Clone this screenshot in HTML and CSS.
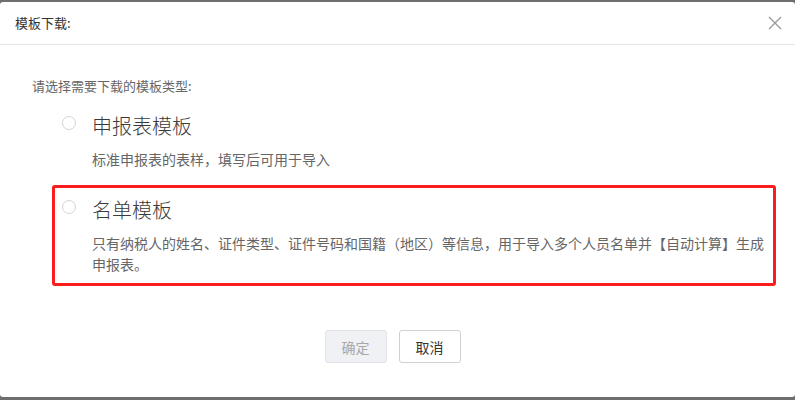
FILE: index.html
```html
<!DOCTYPE html>
<html lang="zh-CN">
<head>
    <meta charset="UTF-8">
    <meta name="viewport" content="width=device-width, initial-scale=1.0">
    <title>模板下载</title>
    <link rel="stylesheet" href="styles.css">
</head>
<body>
    <div class="dialog">
        <div class="dialog-header">
            <span class="dialog-title">模板下载:</span>
            <button class="close-btn" title="关闭">
                <svg width="14" height="14" viewBox="0 0 14 14">
                    <path d="M1 1 L13 13 M13 1 L1 13" stroke="#9a9a9a" stroke-width="1.4" fill="none"/>
                </svg>
            </button>
        </div>

        <div class="dialog-body">
            <p class="hint">请选择需要下载的模板类型:</p>

            <div class="option">
                <span class="radio"></span>
                <div class="option-text">
                    <div class="option-title">申报表模板</div>
                    <div class="option-desc">标准申报表的表样，填写后可用于导入</div>
                </div>
            </div>

            <div class="option highlight">
                <span class="radio"></span>
                <div class="option-text">
                    <div class="option-title">名单模板</div>
                    <div class="option-desc">只有纳税人的姓名、证件类型、证件号码和国籍（地区）等信息，用于导入多个人员名单并【自动计算】生成申报表。</div>
                </div>
            </div>
        </div>

        <div class="dialog-footer">
            <button class="btn disabled">确定</button>
            <button class="btn">取消</button>
        </div>
    </div>
</body>
</html>
```

FILE: styles.css
```css
* {
    margin: 0;
    padding: 0;
    box-sizing: border-box;
}

body {
    font-family: "Noto Sans CJK SC", "Noto Sans", sans-serif;
    color: #333;
    background: #6e6e6e;
    height: 400px;
    overflow: hidden;
}

.dialog {
    margin-top: 2px;
    height: 395px;
    background: white;
    border-radius: 3px;
    display: flex;
    flex-direction: column;
}

.dialog-header {
    height: 43px;
    padding: 0 13px 0 15px;
    border-bottom: 1px solid #e6e6e6;
    display: flex;
    align-items: center;
    justify-content: space-between;
}

.dialog-title {
    font-size: 13px;
    line-height: 20px;
    color: #333;
}

.close-btn {
    background: none;
    border: none;
    width: 14px;
    height: 14px;
    cursor: pointer;
    display: flex;
}

.dialog-body {
    padding: 31px 19px 0 32px;
}

.hint {
    font-size: 13px;
    line-height: 20px;
    color: #666;
    margin-bottom: 5px;
}

.option {
    margin-left: 20px;
    border: 3px solid transparent;
    border-radius: 3px;
    padding: 8px 5px 8px 7px;
    display: flex;
    gap: 16px;
}

.option + .option {
    margin-top: 4px;
}

.option.highlight {
    border-color: #fb1d1d;
}

.radio {
    flex: none;
    width: 14px;
    height: 14px;
    margin-top: 4px;
    border: 1px solid #d4d4d4;
    border-radius: 50%;
    background: white;
}

.option-title {
    font-size: 20px;
    font-weight: 300;
    line-height: 28px;
    color: #3a3a3a;
}

.option-desc {
    margin-top: 9px;
    font-size: 14px;
    line-height: 21px;
    color: #666;
}

.dialog-footer {
    padding: 44px 10px 0 0;
    display: flex;
    justify-content: center;
    gap: 12px;
}

.btn {
    width: 62px;
    height: 33px;
    font-family: inherit;
    font-size: 14px;
    color: #333;
    background: white;
    border: 1px solid #cfcfd4;
    border-radius: 3px;
    cursor: pointer;
}

.btn.disabled {
    color: #a8a8a8;
    background: #f0f1f5;
    border-color: #e2e3e8;
    cursor: not-allowed;
}
```
